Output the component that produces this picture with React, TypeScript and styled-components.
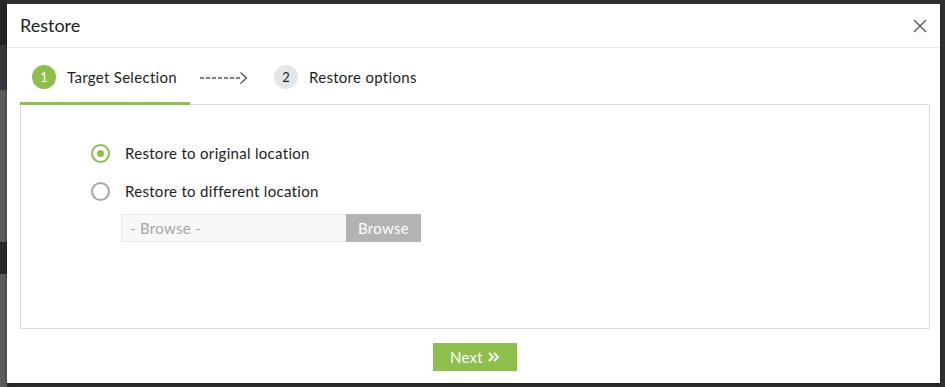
import React from "react";
import styled, { createGlobalStyle } from "styled-components";

const GlobalStyle = createGlobalStyle`
  html, body {
    margin: 0;
    padding: 0;
    background: #3a3a3a;
    font-family: "Lato", "Open Sans", "Liberation Sans", sans-serif;
  }
`;

const Page = styled.div`
  width: 945px;
  height: 387px;
  display: flex;
  overflow: hidden;
  background: #2f2f2f;
`;

const Strip = styled.div`
  width: 7px;
  display: flex;
  flex-direction: column;
  flex-shrink: 0;
`;

const StripBlock = styled.div<{ $h: number; $bg: string }>`
  height: ${(p) => p.$h}px;
  background: ${(p) => p.$bg};
  flex-shrink: 0;
`;

const Modal = styled.div`
  width: 933px;
  height: 379px;
  margin-top: 4px;
  background: #fff;
  display: flex;
  flex-direction: column;
  flex-shrink: 0;
  box-shadow: 0 1px 3px rgba(0, 0, 0, 0.4);
`;

const Header = styled.div`
  height: 44px;
  flex-shrink: 0;
  display: flex;
  align-items: center;
  justify-content: space-between;
  padding: 0 12px 0 13px;
  border-bottom: 1px solid #e6e6e6;
  box-sizing: border-box;
`;

const Title = styled.h2`
  margin: 0 0 1px;
  font-size: 18px;
  font-weight: 400;
  color: #222;
`;

const Close = styled.button`
  border: none;
  background: none;
  padding: 0;
  width: 16px;
  height: 16px;
  display: flex;
  cursor: pointer;
`;

const Body = styled.div`
  flex: 1;
  display: flex;
  flex-direction: column;
  padding: 0 10px 0 13px;
`;

const Steps = styled.div`
  height: 56px;
  flex-shrink: 0;
  display: flex;
  align-items: stretch;
  border-bottom: 1px solid #dcdcdc;
`;

const Step = styled.div<{ $active?: boolean }>`
  display: flex;
  align-items: center;
  gap: 11px;
  padding: 4px 13px 0 12px;
  margin-bottom: -1px;
  border-bottom: 3px solid ${(p) => (p.$active ? "#8cc04b" : "transparent")};
  font-size: 15px;
  letter-spacing: 0.3px;
  color: #1e1e1e;
`;

const StepNum = styled.span<{ $active?: boolean }>`
  width: 24px;
  height: 24px;
  border-radius: 50%;
  display: flex;
  align-items: center;
  justify-content: center;
  font-size: 13px;
  letter-spacing: 0;
  background: ${(p) => (p.$active ? "#8cc04b" : "#e3e7ea")};
  color: ${(p) => (p.$active ? "#fff" : "#222")};
`;

const Arrow = styled.div`
  display: flex;
  align-items: center;
  padding: 4px 14px 0 10px;
`;

const Panel = styled.div`
  height: 224px;
  flex-shrink: 0;
  box-sizing: border-box;
  border: 1px solid #dcdcdc;
  border-top: none;
  padding: 37px 0 0 70px;
  display: flex;
  flex-direction: column;
`;

const Option = styled.label`
  display: flex;
  align-items: center;
  gap: 15px;
  height: 22px;
  margin-bottom: 16px;
  font-size: 15px;
  letter-spacing: 0.3px;
  color: #1e1e1e;
  cursor: pointer;
`;

const Radio = styled.span<{ $checked?: boolean }>`
  width: 19px;
  height: 19px;
  box-sizing: border-box;
  border-radius: 50%;
  border: 2px solid ${(p) => (p.$checked ? "#8cc04b" : "#a7a7a7")};
  display: flex;
  align-items: center;
  justify-content: center;
  &::after {
    content: "";
    width: 7px;
    height: 7px;
    border-radius: 50%;
    background: ${(p) => (p.$checked ? "#8cc04b" : "transparent")};
  }
`;

const BrowseRow = styled.div`
  display: flex;
  margin: -4px 0 0 30px;
  height: 28px;
`;

const BrowseInput = styled.input`
  width: 225px;
  box-sizing: border-box;
  border: 1px solid #e8e8e8;
  border-right: none;
  background: #f8f8f8;
  padding: 0 8px;
  font-family: inherit;
  font-size: 15px;
  letter-spacing: 0.3px;
  color: #222;
  outline: none;
  &::placeholder {
    color: #a5a5a5;
  }
`;

const BrowseButton = styled.button`
  width: 75px;
  border: none;
  background: #b3b3b3;
  color: #fff;
  font-family: inherit;
  font-size: 15px;
  letter-spacing: 0.3px;
  padding: 0;
`;

const Footer = styled.div`
  flex: 1;
  display: flex;
  justify-content: center;
  align-items: flex-start;
  padding-top: 14px;
`;

const NextButton = styled.button`
  width: 84px;
  height: 28px;
  border: none;
  background: #8cc04b;
  color: #fff;
  font-family: inherit;
  font-size: 15px;
  letter-spacing: 0.3px;
  display: flex;
  align-items: center;
  justify-content: center;
  gap: 5px;
  padding: 0;
  cursor: pointer;
`;

const leftStrip: [number, string][] = [
  [45, "#262626"],
  [45, "#33393e"],
  [152, "#5b5b5b"],
  [32, "#24292d"],
  [113, "#5c5c5c"],
];

export default function App() {
  return (
    <>
      <GlobalStyle />
      <Page>
        <Strip>
          {leftStrip.map(([h, bg], i) => (
            <StripBlock key={i} $h={h} $bg={bg} />
          ))}
        </Strip>
        <Modal>
          <Header>
            <Title>Restore</Title>
            <Close aria-label="Close">
              <svg width="16" height="16" viewBox="0 0 16 16">
                <path d="M2 2 L14 14 M14 2 L2 14" stroke="#666" strokeWidth="1.6" />
              </svg>
            </Close>
          </Header>
          <Body>
            <Steps>
              <Step $active>
                <StepNum $active>1</StepNum>
                Target Selection
              </Step>
              <Arrow>
                <svg width="48" height="14" viewBox="0 0 48 14">
                  <path d="M0 7 H41" stroke="#555" strokeWidth="1.4" strokeDasharray="4 2" />
                  <path d="M40.5 1.5 L46.5 7 L40.5 12.5" stroke="#555" strokeWidth="1.4" fill="none" />
                </svg>
              </Arrow>
              <Step>
                <StepNum>2</StepNum>
                Restore options
              </Step>
            </Steps>
            <Panel>
              <Option>
                <Radio $checked />
                Restore to original location
              </Option>
              <Option>
                <Radio />
                Restore to different location
              </Option>
              <BrowseRow>
                <BrowseInput placeholder="- Browse -" readOnly />
                <BrowseButton>Browse</BrowseButton>
              </BrowseRow>
            </Panel>
            <Footer>
              <NextButton>
                Next
                <svg width="12" height="10" viewBox="0 0 12 10">
                  <path d="M1 1 L5 5 L1 9 M6 1 L10 5 L6 9" stroke="#fff" strokeWidth="2" fill="none" />
                </svg>
              </NextButton>
            </Footer>
          </Body>
        </Modal>
      </Page>
    </>
  );
}
